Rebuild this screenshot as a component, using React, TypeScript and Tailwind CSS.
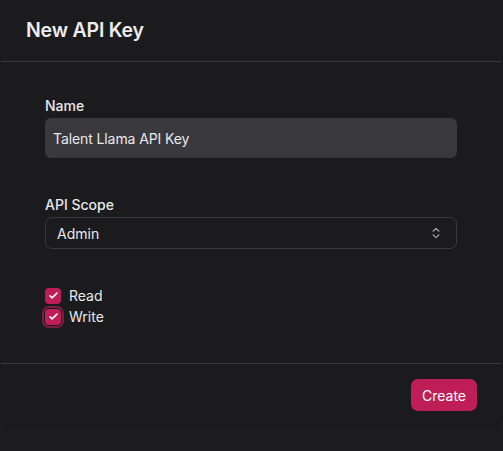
import React from "react";

function Check() {
  return (
    <svg viewBox="0 0 16 16" className="w-[11px] h-[11px]" fill="none" stroke="white" strokeWidth="2.2" strokeLinecap="round" strokeLinejoin="round">
      <path d="M3 8.5l3 3 7-7" />
    </svg>
  );
}

export default function App() {
  return (
    <div className="w-[503px] h-[451px] overflow-hidden bg-[#1d1d1f] relative" style={{ fontFamily: "Inter, 'Noto Sans', sans-serif" }}>
      <div className="w-[500px] ml-[1px] bg-[#1b1b1d] rounded-b-[12px] shadow-[0_2px_6px_rgba(0,0,0,0.2)] flex flex-col">
        <div className="h-[62px] px-[25px] flex items-center border-b border-[#3a3a3d]">
          <h2 className="text-[19.5px] font-semibold text-[#ececee] tracking-[-0.2px]">New API Key</h2>
        </div>
        <div className="px-[44px] pt-[34px] pb-[36px] flex flex-col">
          <label className="text-[14px] leading-[20px] font-medium text-[#e8e8ea]">Name</label>
          <div className="mt-[2px] h-[40px] rounded-[6px] bg-[#38383d] flex items-center px-[8px] text-[14px] text-[#e8e8ea] tracking-[-0.1px]">
            Talent Llama API Key
          </div>
          <label className="mt-[37px] text-[14px] leading-[20px] font-medium text-[#e8e8ea]">API Scope</label>
          <div className="mt-[2px] h-[32px] rounded-[7px] border border-[#3a3a3e] flex items-center justify-between pl-[11px] pr-[13px] text-[14px] text-[#e8e8ea]">
            <span>Admin</span>
            <svg viewBox="0 0 24 24" className="w-[14px] h-[16px]" fill="none" stroke="#a1a1aa" strokeWidth="2" strokeLinecap="round" strokeLinejoin="round">
              <path d="M7 15l5 5 5-5" />
              <path d="M7 9l5-5 5 5" />
            </svg>
          </div>
          <div className="mt-[36px] flex flex-col">
            <div className="h-[21px] flex items-center gap-[8px]">
              <span className="w-[16px] h-[16px] rounded-[4px] bg-[#be1d55] flex items-center justify-center">
                <Check />
              </span>
              <span className="text-[14px] text-[#e8e8ea]">Read</span>
            </div>
            <div className="h-[21px] flex items-center gap-[8px]">
              <span className="w-[16px] h-[16px] rounded-[4px] bg-[#be1d55] flex items-center justify-center ring-[2px] ring-[#7c1d3f] ring-offset-[1px] ring-offset-[#1b1b1d]">
                <Check />
              </span>
              <span className="text-[14px] text-[#e8e8ea]">Write</span>
            </div>
          </div>
        </div>
        <div className="border-t border-[#3a3a3d] px-[24px] py-[15px] flex justify-end">
          <button className="h-[32px] px-[11px] rounded-[7px] bg-[#be1d55] text-white text-[14px] font-normal">Create</button>
        </div>
      </div>
    </div>
  );
}
